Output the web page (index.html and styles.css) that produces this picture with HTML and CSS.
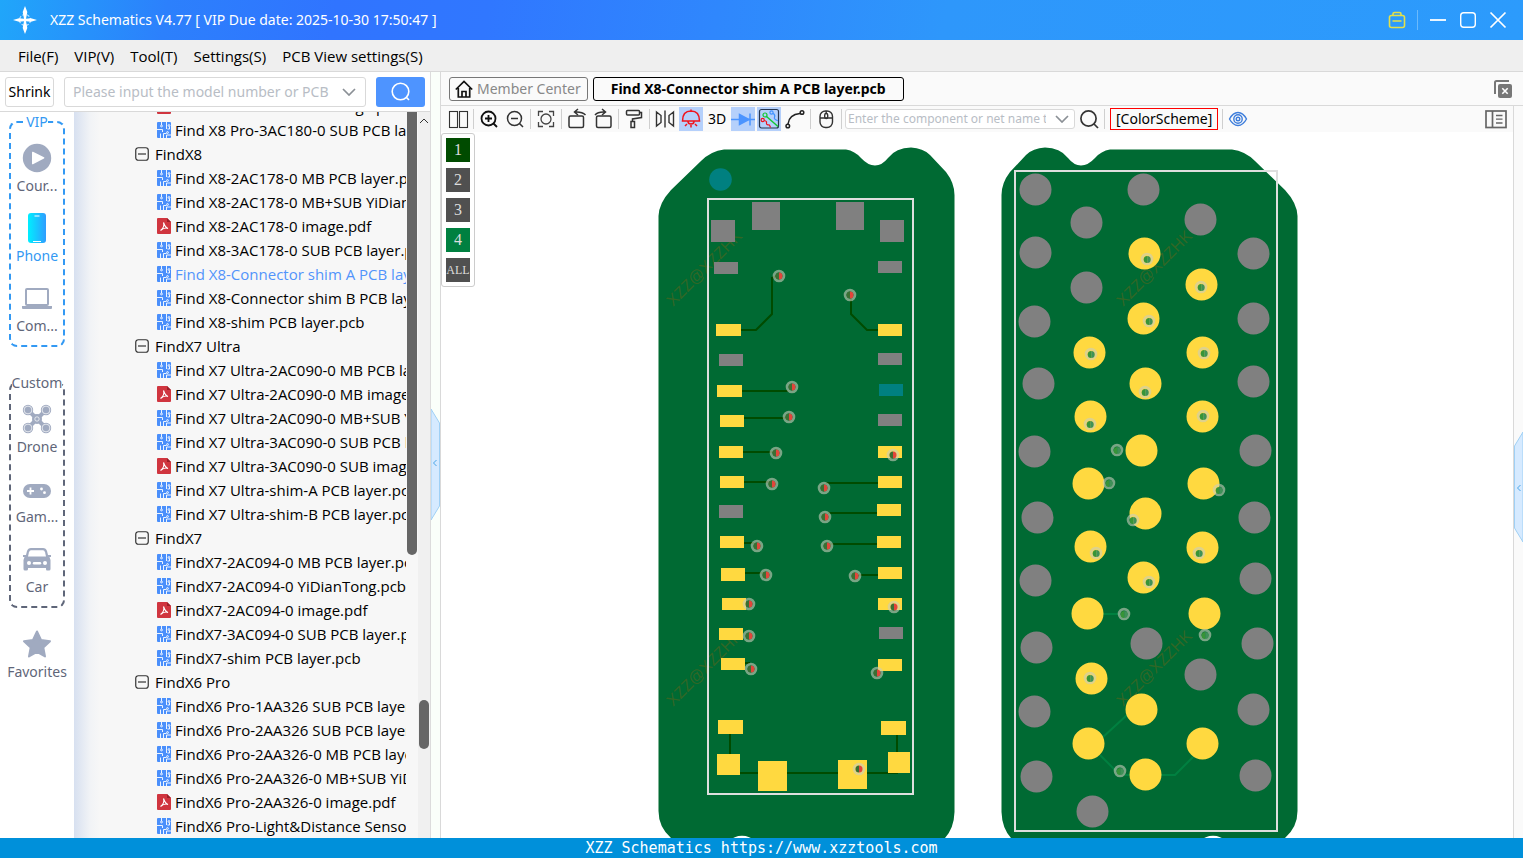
FILE: index.html
```html
<!DOCTYPE html>
<html lang="en">
<head>
<meta charset="utf-8">
<title>XZZ Schematics</title>
<link rel="stylesheet" href="styles.css">
</head>
<body>
<svg class="defs" aria-hidden="true">
  <defs>
    <symbol id="pcb" viewBox="0 0 14 16"><rect width="14" height="16" rx="1" fill="#4a8ffb"/><g fill="none" stroke="#fff" stroke-width=".9"><path d="M4.500 0v3M0 7.500h5.500V10M3.500 16v-4.500M9.500 0v7M6.500 16v-4.500h3M10.500 7h2V4.500M9.500 16v-3h4.500"/><circle cx="4.500" cy="4" r=".9"/><circle cx="12" cy="3.500" r=".9"/><circle cx="10.500" cy="10.500" r=".9"/></g></symbol>
    <symbol id="pdf" viewBox="0 0 14 16"><path d="M1 0h9l4 4v11q0 1-1 1H1q-1 0-1-1V1q0-1 1-1z" fill="#d0353f"/><path d="M10 0l4 4h-4z" fill="#9b1f28"/><path d="M6.500 4.500c1.500 4 2.500 5.500 4.500 6-2-1-5 0-7.500 2 2.500-2 4-5 3-8z" fill="none" stroke="#fff" stroke-width="1.100"/></symbol>
    <symbol id="minus" viewBox="0 0 14 14"><rect x=".75" y=".75" width="12.500" height="12.500" rx="2.500" fill="none" stroke="#333" stroke-width="1.200"/><path d="M3 7h8" stroke="#333" stroke-width="1.200"/></symbol>
    <symbol id="chevron" viewBox="0 0 14 8"><path d="M1 1l6 6 6-6" fill="none" stroke="#8b9096" stroke-width="1.700"/></symbol>
    <g id="via"><circle r="4.900" fill="none" stroke="#c9cdbd" stroke-opacity=".6" stroke-width="2.800"/><path d="M0-3.500a3.500 3.500 0 0 0 0 7z" fill="#3b6f33"/><path d="M0-3.500a3.500 3.500 0 0 1 0 7z" fill="#e2453a"/></g>
    <g id="hole"><circle r="4.900" fill="none" stroke="#c9cdbd" stroke-opacity=".6" stroke-width="2.800"/><path d="M.2-3a3.500 3.500 0 0 0 0 7z" fill="#379438"/><path d="M.2-3a3.500 3.500 0 0 1 0 7z" fill="#3f9158"/></g>
  </defs>
</svg>
<div class="app">
  <header class="titlebar">
    <svg class="logo" width="24" height="30" viewBox="0 0 24 30"><circle cx="12" cy="15" r="5.500" fill="none" stroke="#bfe4ff" stroke-width="1.200" stroke-dasharray="3 1.500"/><path d="M12 1l2.300 6-1.300 6.800 5-.6 6 1.800-6 1.800-5-.6 1.300 6.800L12 29l-2.300-6 1.300-6.800-5 .6L0 15l6-1.800 5 .6L9.700 7z" fill="#fff"/></svg>
    <h1 class="title">XZZ Schematics V4.77 [ VIP Due date: 2025-10-30 17:50:47 ]</h1>
    <button class="winbtn" aria-label="Toolbox"><svg width="18" height="18" viewBox="0 0 18 18" fill="none" stroke="#e3e04a" stroke-width="1.600"><rect x="1.500" y="4.500" width="15" height="12" rx="2"/><path d="M5 4V3q0-1.500 1.500-1.500h5Q13 1.500 13 3v1M4.500 10h9"/></svg></button>
    <span class="winsep"></span>
    <button class="winbtn" aria-label="Minimize"><svg width="18" height="18" viewBox="0 0 18 18" stroke="#fff" stroke-width="1.800"><path d="M1 9h16"/></svg></button>
    <button class="winbtn" aria-label="Maximize"><svg width="18" height="18" viewBox="0 0 18 18" fill="none" stroke="#fff" stroke-width="1.400"><rect x="1.700" y="1.700" width="14.600" height="14.600" rx="3"/></svg></button>
    <button class="winbtn" aria-label="Close"><svg width="18" height="18" viewBox="0 0 18 18" stroke="#fff" stroke-width="1.700"><path d="M1.500 1.500l15 15M16.500 1.500l-15 15"/></svg></button>
  </header>
  <nav class="menubar">
    <button>File(F)</button><button>VIP(V)</button><button>Tool(T)</button><button>Settings(S)</button><button>PCB View settings(S)</button>
  </nav>
  <div class="workspace">
    <aside class="left">
      <div class="searchrow">
        <button class="shrink">Shrink</button>
        <label class="combo combo-model"><input type="text" aria-label="Model search" placeholder="Please input the model number or PCB"><svg width="14" height="8"><use href="#chevron"/></svg></label>
        <button class="go" aria-label="Search"><svg width="20" height="20" viewBox="0 0 20 20" fill="none" stroke="#fff" stroke-width="1.600"><circle cx="9.500" cy="9.500" r="8.300"/><path d="M15.500 15.500l2.500 2.500"/></svg></button>
      </div>
      <div class="browser">
        <nav class="categories">
          <fieldset class="group vip">
            <legend>VIP</legend>
            <button class="cat"><svg width="32" height="32" viewBox="0 0 32 32"><circle cx="16" cy="16" r="14.200" fill="#a0aac0"/><path d="M11 10.300q0-1 1-.5l11 5.500q.9.600 0 1.200l-11 5.700q-1 .4-1-.5z" fill="#fff"/></svg><span>Cour...</span></button>
            <button class="cat active"><svg width="32" height="32" viewBox="0 0 32 32"><linearGradient id="ph"><stop stop-color="#00efff"/><stop offset="1" stop-color="#2f9dff"/></linearGradient><rect x="7" y="1" width="18" height="30" rx="3" fill="url(#ph)"/><path d="M13.500 4h5M12 29.500h8" stroke="#fff" stroke-width="1.200"/></svg><span>Phone</span></button>
            <button class="cat"><svg width="32" height="32" viewBox="0 0 32 32"><rect x="5" y="7" width="22" height="16" rx="1" fill="none" stroke="#a0aac0" stroke-width="2"/><path d="M1 24h30v2q0 1-1 1H2q-1 0-1-1z" fill="#a0aac0"/></svg><span>Com...</span></button>
          </fieldset>
          <fieldset class="group custom">
            <legend>Custom</legend>
            <button class="cat"><svg width="32" height="32" viewBox="0 0 32 32"><path d="M7 7l18 18M25 7L7 25" stroke="#a0aac0" stroke-width="4"/><g fill="#a0aac0"><circle cx="16" cy="16" r="5"/><circle cx="7" cy="7" r="5.200"/><circle cx="25" cy="7" r="5.200"/><circle cx="7" cy="25" r="5.200"/><circle cx="25" cy="25" r="5.200"/></g><g fill="none" stroke="#fff" stroke-width=".7"><circle cx="16" cy="16" r="2.200"/><circle cx="7" cy="7" r="3.900"/><circle cx="25" cy="7" r="3.900"/><circle cx="7" cy="25" r="3.900"/><circle cx="25" cy="25" r="3.900"/></g></svg><span>Drone</span></button>
            <button class="cat"><svg width="32" height="32" viewBox="0 0 32 32"><rect x="2" y="11" width="28" height="14" rx="7" fill="#a0aac0"/><path d="M6 18h7M9.500 14.500v7" stroke="#fff" stroke-width="1.800"/><circle cx="20.500" cy="16" r="1.400" fill="#fff"/><circle cx="23.500" cy="19.700" r="1.400" fill="#fff"/></svg><span>Gam...</span></button>
            <button class="cat"><svg width="32" height="32" viewBox="0 0 32 32"><path d="M10 5h12q3 0 4 3l1 4h3v2h-1.500l1 3v9q0 1.500-1.500 1.500h-2Q25 27.500 25 26v-1H7v1q0 1.500-1.500 1.500h-1.500Q2.500 27.500 2.500 26v-9l1-3H2v-2h3l1-4q1-3 4-3z" fill="#a0aac0"/><path d="M10 7.300h12q1.500 0 2 2l1 4.200H7l1-4.200q.5-2 2-2z" fill="#fff"/><circle cx="8" cy="20" r="2" fill="#fff"/><circle cx="24" cy="20" r="2" fill="#fff"/><path d="M13 20.300h6" stroke="#fff" stroke-width="2.400" stroke-linecap="round"/></svg><span>Car</span></button>
          </fieldset>
          <button class="cat favorites"><svg width="32" height="32" viewBox="0 0 32 32"><path d="M16 3.500l4 8.500 9 1.200-6.700 6.300 1.700 9-8-4.500-8 4.500 1.700-9L3 13.200 12 12z" fill="#a0aac0" stroke="#a0aac0" stroke-width="2" stroke-linejoin="round"/></svg><span>Favorites</span></button>
        </nav>
        <div class="treepane">
          <ul class="tree">
            <li class="file"><svg><use href="#pdf"/></svg><a href="#">Find X8 Pro-2AC180-0 image.pdf</a></li>
            <li class="file"><svg><use href="#pcb"/></svg><a href="#">Find X8 Pro-3AC180-0 SUB PCB layer.pcb</a></li>
            <li class="folder"><svg><use href="#minus"/></svg><a href="#">FindX8</a></li>
            <li class="file"><svg><use href="#pcb"/></svg><a href="#">Find X8-2AC178-0 MB PCB layer.pcb</a></li>
            <li class="file"><svg><use href="#pcb"/></svg><a href="#">Find X8-2AC178-0 MB+SUB YiDianTong.pcb</a></li>
            <li class="file"><svg><use href="#pdf"/></svg><a href="#">Find X8-2AC178-0 image.pdf</a></li>
            <li class="file"><svg><use href="#pcb"/></svg><a href="#">Find X8-3AC178-0 SUB PCB layer.pcb</a></li>
            <li class="file current"><svg><use href="#pcb"/></svg><a href="#">Find X8-Connector shim A PCB layer.pcb</a></li>
            <li class="file"><svg><use href="#pcb"/></svg><a href="#">Find X8-Connector shim B PCB layer.pcb</a></li>
            <li class="file"><svg><use href="#pcb"/></svg><a href="#">Find X8-shim PCB layer.pcb</a></li>
            <li class="folder"><svg><use href="#minus"/></svg><a href="#">FindX7 Ultra</a></li>
            <li class="file"><svg><use href="#pcb"/></svg><a href="#">Find X7 Ultra-2AC090-0 MB PCB layer.pcb</a></li>
            <li class="file"><svg><use href="#pdf"/></svg><a href="#">Find X7 Ultra-2AC090-0 MB image.pdf</a></li>
            <li class="file"><svg><use href="#pcb"/></svg><a href="#">Find X7 Ultra-2AC090-0 MB+SUB YiDianTong.pcb</a></li>
            <li class="file"><svg><use href="#pcb"/></svg><a href="#">Find X7 Ultra-3AC090-0 SUB PCB layer.pcb</a></li>
            <li class="file"><svg><use href="#pdf"/></svg><a href="#">Find X7 Ultra-3AC090-0 SUB image.pdf</a></li>
            <li class="file"><svg><use href="#pcb"/></svg><a href="#">Find X7 Ultra-shim-A PCB layer.pcb</a></li>
            <li class="file"><svg><use href="#pcb"/></svg><a href="#">Find X7 Ultra-shim-B PCB layer.pcb</a></li>
            <li class="folder"><svg><use href="#minus"/></svg><a href="#">FindX7</a></li>
            <li class="file"><svg><use href="#pcb"/></svg><a href="#">FindX7-2AC094-0 MB PCB layer.pcb</a></li>
            <li class="file"><svg><use href="#pcb"/></svg><a href="#">FindX7-2AC094-0 YiDianTong.pcb</a></li>
            <li class="file"><svg><use href="#pdf"/></svg><a href="#">FindX7-2AC094-0 image.pdf</a></li>
            <li class="file"><svg><use href="#pcb"/></svg><a href="#">FindX7-3AC094-0 SUB PCB layer.pcb</a></li>
            <li class="file"><svg><use href="#pcb"/></svg><a href="#">FindX7-shim PCB layer.pcb</a></li>
            <li class="folder"><svg><use href="#minus"/></svg><a href="#">FindX6 Pro</a></li>
            <li class="file"><svg><use href="#pcb"/></svg><a href="#">FindX6 Pro-1AA326 SUB PCB layer.pcb</a></li>
            <li class="file"><svg><use href="#pcb"/></svg><a href="#">FindX6 Pro-2AA326 SUB PCB layer.pcb</a></li>
            <li class="file"><svg><use href="#pcb"/></svg><a href="#">FindX6 Pro-2AA326-0 MB PCB layer.pcb</a></li>
            <li class="file"><svg><use href="#pcb"/></svg><a href="#">FindX6 Pro-2AA326-0 MB+SUB YiDianTong.pcb</a></li>
            <li class="file"><svg><use href="#pdf"/></svg><a href="#">FindX6 Pro-2AA326-0 image.pdf</a></li>
            <li class="file"><svg><use href="#pcb"/></svg><a href="#">FindX6 Pro-Light&amp;Distance Sensor.pcb</a></li>
          </ul>
          <div class="bar bar-inner"><span class="thumb"></span></div>
          <div class="bar bar-outer"><svg width="10" height="6" viewBox="0 0 10 6"><path d="M1 5l4-4 4 4" fill="none" stroke="#333"/></svg><span class="thumb"></span></div>
        </div>
      </div>
    </aside>
    <div class="splitter"><svg width="9" height="111" viewBox="0 0 9 111"><path d="M0 0l8.500 14v83L0 111z" fill="#d6eaff" stroke="#9fd0f5"/><path d="M5.500 51L2.500 54l3 3" fill="none" stroke="#4aa6e8"/></svg></div>
    <main class="viewer">
      <div class="tabs">
        <button class="tab"><svg width="18" height="18" viewBox="0 0 18 18" fill="none" stroke="#111" stroke-width="1.700"><path d="M.8 9.500L9 1.500l8.200 8M3.300 8v9h11.400V8M7 17v-5.500h4V17"/></svg>Member Center</button>
        <button class="tab open">Find X8-Connector shim A PCB layer.pcb</button>
        <button class="tool closeall" aria-label="Close all"><svg width="20" height="20" viewBox="0 0 20 20"><path d="M2 15V3.500Q2 2 3.500 2H16" fill="none" stroke="#777" stroke-width="2"/><rect x="5" y="5" width="14" height="14" rx="2" fill="#777"/><path d="M9.300 9.300l5.400 5.400M14.700 9.300l-5.400 5.400" stroke="#fff" stroke-width="1.600"/></svg></button>
      </div>
      <div class="body">
        <div class="stage">
          <div class="toolbar">
            <button class="tool" aria-label="Split view"><svg viewBox="0 0 24 24" fill="none" stroke="#333" stroke-width="1.100"><rect x="3.500" y="4.500" width="8" height="16"/><rect x="13.500" y="4.500" width="8" height="16"/></svg></button>
            <span class="sep"></span>
            <button class="tool" aria-label="Zoom in"><svg viewBox="0 0 24 24" fill="none" stroke="#111" stroke-width="1.800"><circle cx="11.500" cy="11.500" r="7"/><path d="M16.500 16.500l3.500 3.500M8 11.500h7M11.500 8v7"/></svg></button>
            <button class="tool" aria-label="Zoom out"><svg viewBox="0 0 24 24" fill="none" stroke="#333" stroke-width="1.500"><circle cx="11.500" cy="11.500" r="7"/><path d="M16.500 16.500l3.500 3.500M8 11.500h7"/></svg></button>
            <span class="sep"></span>
            <button class="tool" aria-label="Fit"><svg viewBox="0 0 24 24" fill="none" stroke="#444" stroke-width="1.300"><circle cx="12" cy="12" r="5"/><path d="M4.500 9V4.500H9M15 4.500h4.500V9M19.500 15v4.500H15M9 19.500H4.500V15"/></svg></button>
            <span class="sep"></span>
            <button class="tool" aria-label="Rotate left"><svg viewBox="0 0 24 24" fill="none" stroke="#333" stroke-width="1.500"><rect x="4" y="9" width="14.500" height="11.500" rx="1.500"/><path d="M20.500 8Q17 4.500 10 5M13 2l-3.500 3L13 8"/></svg></button>
            <button class="tool" aria-label="Rotate right"><svg viewBox="0 0 24 24" fill="none" stroke="#333" stroke-width="1.500"><rect x="5.500" y="9" width="14.500" height="11.500" rx="1.500"/><path d="M4 8Q7 4.500 14 5M11 2l3.500 3L11 8"/></svg></button>
            <span class="sep"></span>
            <button class="tool" aria-label="Paint"><svg viewBox="0 0 24 24" fill="none" stroke="#333" stroke-width="1.500"><rect x="4.500" y="3.500" width="13" height="4.500" rx="1"/><path d="M17.500 5.500h2v5l-9 1.500v3"/><rect x="9" y="14.500" width="3.500" height="6"/></svg></button>
            <span class="sep"></span>
            <button class="tool" aria-label="Mirror"><svg viewBox="0 0 24 24" fill="none" stroke="#333" stroke-width="1.400"><path d="M12 3.500v17M3.500 5L8 8.500v7L3.500 19zM20.500 5L16 8.500v7l4.500 3.500z"/></svg></button>
            <button class="tool on" aria-label="Light"><svg viewBox="0 0 24 24" fill="none" stroke="#f0141e" stroke-width="1.500"><path d="M3.500 14q0-10 8.500-10t8.500 10zM12 2.500V5M9 14.500q0 2.500 3 2.500t3-2.500M12 18v2.500M8 17l-2 2M16 17l2 2"/></svg></button>
            <button class="tool text">3D</button>
            <button class="tool on" aria-label="Diode"><svg viewBox="0 0 24 24" stroke="#4b94ff" stroke-width="1.500"><path d="M0 12.500h24M19 6.500v12" /><path d="M8.500 7.500v10l9.500-5z" fill="#4b94ff"/></svg></button>
            <button class="tool on" aria-label="Nets"><svg viewBox="0 0 24 24" fill="none" stroke-width="1.200"><rect x="2.500" y="2.500" width="19" height="18.500" rx="2" stroke="#26364f"/><path d="M9.500 9.500l11.500 10" stroke="#14c832" stroke-width="1.500"/><circle cx="8" cy="8" r="2" stroke="#14c832"/><path d="M16.300 6.300q2.200 2 1.200 4t3.500 3.500" stroke="#3f92ff"/><circle cx="14.500" cy="5.500" r="1.600" stroke="#3f92ff"/><path d="M7.300 13.500q2.700.5 2.200 2.500t3 2l1 2.500" stroke="#f0141e"/><circle cx="5.700" cy="13" r="1.600" stroke="#f0141e"/></svg></button>
            <button class="tool" aria-label="Curve"><svg viewBox="0 0 24 24" fill="none" stroke="#222" stroke-width="1.500"><path d="M5 17Q6 7.500 17 6.500"/><circle cx="4.800" cy="19" r="1.800"/><circle cx="19" cy="5.500" r="1.800"/></svg></button>
            <span class="sep"></span>
            <button class="tool" aria-label="Mouse"><svg viewBox="0 0 24 24" fill="none" stroke="#333" stroke-width="1.400"><rect x="6" y="4" width="12.500" height="16.500" rx="5.500"/><path d="M6 11h12.500M12.200 4v3"/><rect x="10.700" y="6.500" width="3" height="5" rx="1.500"/></svg></button>
            <span class="sep"></span>
            <label class="combo combo-net"><input type="text" aria-label="Component or net search" placeholder="Enter the component or net name to search"><svg width="14" height="8"><use href="#chevron"/></svg></label>
            <button class="tool" aria-label="Find"><svg viewBox="0 0 24 24" fill="none" stroke="#333" stroke-width="1.700"><circle cx="11.500" cy="11.500" r="7.600"/><path d="M17 17l4 4"/></svg></button>
            <span class="sep"></span>
            <button class="scheme">[ColorScheme]</button>
            <span class="sep"></span>
            <button class="tool" aria-label="Visibility"><svg viewBox="0 0 24 24" fill="none" stroke="#3d7ddb" stroke-width="1.400"><path d="M3.500 12Q7 5.500 12 5.500T20.500 12Q17 18.500 12 18.500T3.500 12z"/><circle cx="12" cy="12" r="4.200"/><circle cx="12" cy="12" r="1.800"/></svg></button>
            <button class="tool panelbtn" aria-label="Side panel"><svg viewBox="0 0 24 24" fill="none" stroke="#666" stroke-width="1.700"><rect x="2" y="4" width="20" height="16.500"/><path d="M8.500 4v16.500"/><path d="M12 8.500h6.500M12 12.200h6.500M12 16h6.500" stroke-width="1.300"/></svg></button>
          </div>
          <div class="canvas">
            <div class="layers">
              <button class="layer l1">1</button><button class="layer">2</button><button class="layer">3</button><button class="layer l4">4</button><button class="layer all">ALL</button>
            </div>
            <svg class="board" viewBox="441 132 1072 706" preserveAspectRatio="xMidYMin meet">
              <g fill="#006a33" stroke="#7fb496" stroke-width="1">
                <path id="outline" stroke="none" d="M658.500 216Q659 203 671 190L701 161Q711 151 724 149.500H846Q855 151 861 158 868 165.500 875 165.500T888 158Q896 147.500 911 147.500 923 148 930 155L946 172Q954.500 183 954.500 195V812Q954 828 945 838H671Q658.500 827 658.500 811z"/>
                <use href="#outline" transform="translate(1956) scale(-1 1)" stroke="none"/>
                <path d="M658.500 216V811M954.500 195V812M724 149.500H846M1001.500 197V812M1297.500 216V811M1110 149.500H1232" fill="none"/>
              </g>
              <circle cx="742" cy="854.500" r="18.800" fill="#fff"/><circle cx="1213" cy="854.500" r="18.800" fill="#fff"/>
              <g fill="none" stroke="#004b00" stroke-width="2"><path d="M741 330h15l16-16v-36l5-2M851 297v17l16 16h11M742 391h46M744 418h44M743 452h32M744 482h28M826 483h52M828 513h49M830 544h47M744 543h10M745 573h20M858 575h20M745 663h5M730 734v20M897 735v17M740 773h158"/><path stroke="#008040" d="M1103 614h17M1103 737l24-22M1100 755l16 16M1125 775h10M1161 775h14l18-18"/></g>
              <g class="watermark"><text transform="translate(673 307) rotate(-45)">XZZ@XZZHK</text><text transform="translate(673 707) rotate(-45)">XZZ@XZZHK</text><text transform="translate(1123 307) rotate(-45)">XZZ@XZZHK</text><text transform="translate(1123 707) rotate(-45)">XZZ@XZZHK</text></g>
              <path fill="#808080" d="M711 220h24v22h-24zM752 202h28v28h-28zM836 202h28v28h-28zM880 220h24v22h-24zM714 262h24v12h-24zM878 261h24v12h-24zM719 354h24v12h-24zM878 353h24v12h-24zM878 414h24v12h-24zM719 505h24v13h-24zM879 627h24v12h-24z"/>
              <path fill="none" stroke="#808080" stroke-width="32" stroke-linecap="round" transform="translate(.5 .5)" d="M1035 189h0M1143 189h0M1086 222h0M1200 219h0M1035 252h0M1253 253h0M1086 287h0M1034 321h0M1253 318h0M1038 383h0M1253 381h0M1034 451h0M1255 450h0M1037 517h0M1254 517h0M1035 580h0M1255 578h0M1036 647h0M1146 643h0M1257 643h0M1200 674h0M1034 711h0M1253 709h0M1036 776h0M1255 775h0M1092 811h0"/>
              <path fill="#008080" d="M879 384h24v12h-24z"/><circle cx="720.500" cy="179.500" r="11.300" fill="#008080"/>
              <path fill="#ffd940" d="M716 324h25v12h-25zM878 324h24v12h-24zM717 385h25v12h-25zM720 415h24v12h-24zM719 446h24v12h-24zM878 446h24v12h-24zM720 476h24v12h-24zM878 476h24v12h-24zM877 504h24v12h-24zM720 536h24v12h-24zM877 536h24v12h-24zM721 568h24v13h-24zM878 567h24v12h-24zM722 598h24v12h-24zM878 598h24v12h-24zM719 628h24v12h-24zM721 658h24v12h-24zM878 659h24v12h-24zM718 720h25v14h-25zM881 721h25v14h-25zM717 754h23v21h-23zM888 752h22v21h-22zM758 761h29v30h-29zM838 760h29v29h-29z"/>
              <path fill="none" stroke="#ffd940" stroke-width="32" stroke-linecap="round" transform="translate(.5 .5)" d="M1144 253h0M1201 284h0M1143 318h0M1089 352h0M1202 352h0M1145 383h0M1090 416h0M1202 416h0M1141 450h0M1088 483h0M1203 483h0M1145 513h0M1090 546h0M1202 547h0M1143 577h0M1087 613h0M1204 613h0M1091 678h0M1141 709h0M1088 743h0M1202 743h0M1145 774h0"/>
              <path fill="none" stroke="#dedede" stroke-width="2" d="M708 199h205v595H708zM1015 171h262v660h-262z"/>
              <use href="#via" x="779" y="276"/><use href="#via" x="850" y="295"/><use href="#via" x="792" y="387"/><use href="#via" x="789" y="417"/><use href="#via" x="776" y="453"/><use href="#via" x="893" y="455"/><use href="#via" x="772" y="484"/><use href="#via" x="824" y="488"/><use href="#via" x="825" y="517"/><use href="#via" x="757" y="546"/><use href="#via" x="827" y="546"/><use href="#via" x="766" y="575"/><use href="#via" x="855" y="576"/><use href="#via" x="749" y="604"/><use href="#via" x="894" y="607"/><use href="#via" x="749" y="636"/><use href="#via" x="751" y="669"/><use href="#via" x="877" y="673"/><use href="#via" x="859" y="769"/>
              <use href="#hole" x="1147" y="259"/><use href="#hole" x="1201" y="287"/><use href="#hole" x="1149" y="321"/><use href="#hole" x="1091" y="354"/><use href="#hole" x="1204" y="353"/><use href="#hole" x="1145" y="392"/><use href="#hole" x="1090" y="424"/><use href="#hole" x="1203" y="416"/><use href="#hole" x="1117" y="450"/><use href="#hole" x="1109" y="483"/><use href="#hole" x="1219" y="490"/><use href="#hole" x="1133" y="520"/><use href="#hole" x="1096" y="553"/><use href="#hole" x="1199" y="553"/><use href="#hole" x="1149" y="582"/><use href="#hole" x="1124" y="614"/><use href="#hole" x="1205" y="635"/><use href="#hole" x="1090" y="678"/><use href="#hole" x="1120" y="771"/>
            </svg>
          </div>
        </div>
        <div class="rightstrip"><svg width="9" height="110" viewBox="0 0 9 110"><path d="M9 0L.5 14v82L9 110z" fill="#d6eaff" stroke="#9fd0f5"/><path d="M6.500 53L3.500 56l3 3" fill="none" stroke="#4aa6e8"/></svg></div>
      </div>
    </main>
  </div>
  <footer class="status">XZZ Schematics https://www.xzztools.com</footer>
</div>
</body>
</html>
```
FILE: styles.css
```css
* { box-sizing: border-box; }
body { margin: 0; font: 14px/20px "Noto Sans", "Open Sans", sans-serif; color: #000; }
button { font: inherit; color: inherit; background: none; border: 0; padding: 0; margin: 0; }
svg { display: block; flex: none; }
.defs { position: absolute; width: 0; height: 0; }
.app { display: flex; flex-direction: column; height: 100vh; overflow: hidden; }

.titlebar { display: flex; align-items: center; height: 40px; flex: none; padding: 0 10px 0 13px; color: #fff; background: linear-gradient(100deg, #20a6fa 0, #2c80fc 11%, #3074ff 22%, #3077ff 32%, #2e97fb 62%, #2c9bfc 100%); }
.logo { margin-right: 13px; }
.title { margin: 0 auto 0 0; font-size: 14px; font-weight: 400; }
.winbtn { padding: 0 6px; }
.winsep { width: 1px; height: 20px; margin: 0 5px; background: #6bbafc; }

.menubar { display: flex; gap: 16px; height: 32px; flex: none; padding: 1px 18px 0; background: #efefef; border-bottom: 1px solid #d9d9d9; font-family: "Open Sans", sans-serif; font-size: 15px; }

.workspace { display: flex; flex: 1; min-height: 0; }
.left { width: 431px; flex: none; display: flex; flex-direction: column; border-right: 1px solid #dcdcdc; }
.searchrow { display: flex; height: 40px; flex: none; padding: 5px 5px 4px; border-bottom: 1px solid #d9d9d9; }
.shrink { width: 49px; height: 30px; border: 1px solid #d9d9d9; border-radius: 3px; }
.combo { display: flex; align-items: center; background: #fff; border: 1px solid #d9d9d9; border-radius: 3px; }
.combo input { flex: 1; min-width: 0; border: 0; padding: 0; font: inherit; background: none; outline: 0; }
.combo input::placeholder { color: #b8bdc5; }
.combo-model { flex: 1; height: 30px; margin: 0 10px; padding: 0 9px 0 8px; gap: 6px; }
.go { width: 49px; height: 30px; display: grid; place-items: center; border-radius: 3px; background: #4e94ff; }

.browser { display: flex; flex: 1; min-height: 0; }
.categories { width: 74px; flex: none; padding: 0 9px; color: #5f6679; }
.group { min-width: 0; margin: 0 0 26px; padding: 10px 0 9px; border: 2px dashed #5f6679; border-radius: 8px; display: flex; flex-direction: column; gap: 16px; }
.group legend { margin: 0 auto; padding: 0; height: 20px; }
.vip { border-color: #3399f3; }
.vip legend, .active { color: #3399f3; }
.cat { display: flex; flex-direction: column; align-items: center; gap: 2px; height: 54px; width: 100%; white-space: nowrap; }
.favorites { margin-top: 20px; }
.custom { margin-bottom: 0; }

.treepane { display: flex; flex: 1; min-width: 0; background: linear-gradient(90deg, #d7e0f0 0, #f1f3f6 16px, #f7f7f7 26px); }
.tree { list-style: none; flex: 1; min-width: 0; margin: 0; padding: 0; overflow: hidden; display: flex; flex-direction: column; justify-content: flex-end; font-family: "Open Sans", sans-serif; font-size: 15px; }
.tree li { display: flex; align-items: center; height: 24px; flex: none; white-space: nowrap; gap: 4px; }
.tree a { color: inherit; text-decoration: none; }
.tree svg { width: 14px; height: 16px; }
.file { padding-left: 83px; }
.folder { padding-left: 61px; }
.tree .folder { gap: 6px; }
.tree .current { color: #5294fb; }
.bar { width: 12px; display: flex; flex-direction: column; flex: none; }
.bar-inner .thumb { width: 10px; height: 61%; margin-left: 1px; background: #666; border-radius: 0 0 5px 5px; }
.bar-outer { background: #f0f0f0; align-items: center; }
.bar-outer svg { margin: 6px 0; }
.bar-outer .thumb { width: 10px; height: 49px; margin-top: auto; margin-bottom: 89px; background: #666; border-radius: 5px; }

.splitter { width: 9px; flex: none; display: flex; align-items: center; padding-top: 18px; background: #fafffa; }
.viewer { flex: 1; min-width: 0; display: flex; flex-direction: column; border-left: 1px solid #d9d9d9; }
.tabs { display: flex; gap: 5px; height: 34px; flex: none; padding: 5px 8px 4px; background: #fafafa; border-bottom: 1px solid #d9d9d9; }
.tab { display: flex; align-items: center; gap: 4px; height: 24px; padding: 0 6px 0 5px; border: 1px solid #777; border-radius: 3px; color: #888; }
.open { padding: 0 17px; border-color: #000; color: #000; font-weight: 700; }
.closeall { margin-left: auto; }
.body { display: flex; flex: 1; min-height: 0; }
.stage { flex: 1; min-width: 0; display: flex; flex-direction: column; }
.toolbar { display: flex; align-items: center; gap: 2px; height: 26px; flex: none; padding: 0 5px; background: #fafafa; }
.tool { width: 24px; height: 24px; flex: none; display: grid; place-items: center; }
.toolbar .tool svg { width: 24px; height: 24px; }
.on { background: #b5d0fb; }
.sep { width: 1px; height: 20px; margin: 0 1px; flex: none; background: #cfcfcf; }
.combo-net { width: 230px; height: 20px; padding: 0 5px 0 2px; gap: 9px; font-size: 12px; }
.scheme { height: 22px; margin: 0 1px 0 2px; padding: 0 5px; border: 1px solid red; }
.panelbtn { margin-left: auto; }
.canvas { position: relative; flex: 1; min-height: 0; background: #fff; }
.board { width: 100%; height: 100%; }
.watermark { fill: #54661d; fill-opacity: .6; font: 16px "Liberation Sans", sans-serif; }
.layers { position: absolute; left: 0; top: 1px; display: flex; flex-direction: column; gap: 6px; padding: 4px; border: 1px solid #ccc; border-radius: 3px; background: #fff; }
.layer { width: 24px; height: 24px; background: #505050; color: #ddd; font: 16px/24px "Liberation Serif", serif; }
.l1 { background: #004b00; }
.l4 { background: #008040; }
.layer.all { font-size: 12px; line-height: 24px; }
.rightstrip { width: 10px; flex: none; display: flex; align-items: center; padding-top: 30px; border-left: 1px solid #d9d9d9; background: #fafafa; }

.status { height: 20px; flex: none; background: #0090da; color: #fff; text-align: center; font: 15px/20px "DejaVu Sans Mono", monospace; }
```
